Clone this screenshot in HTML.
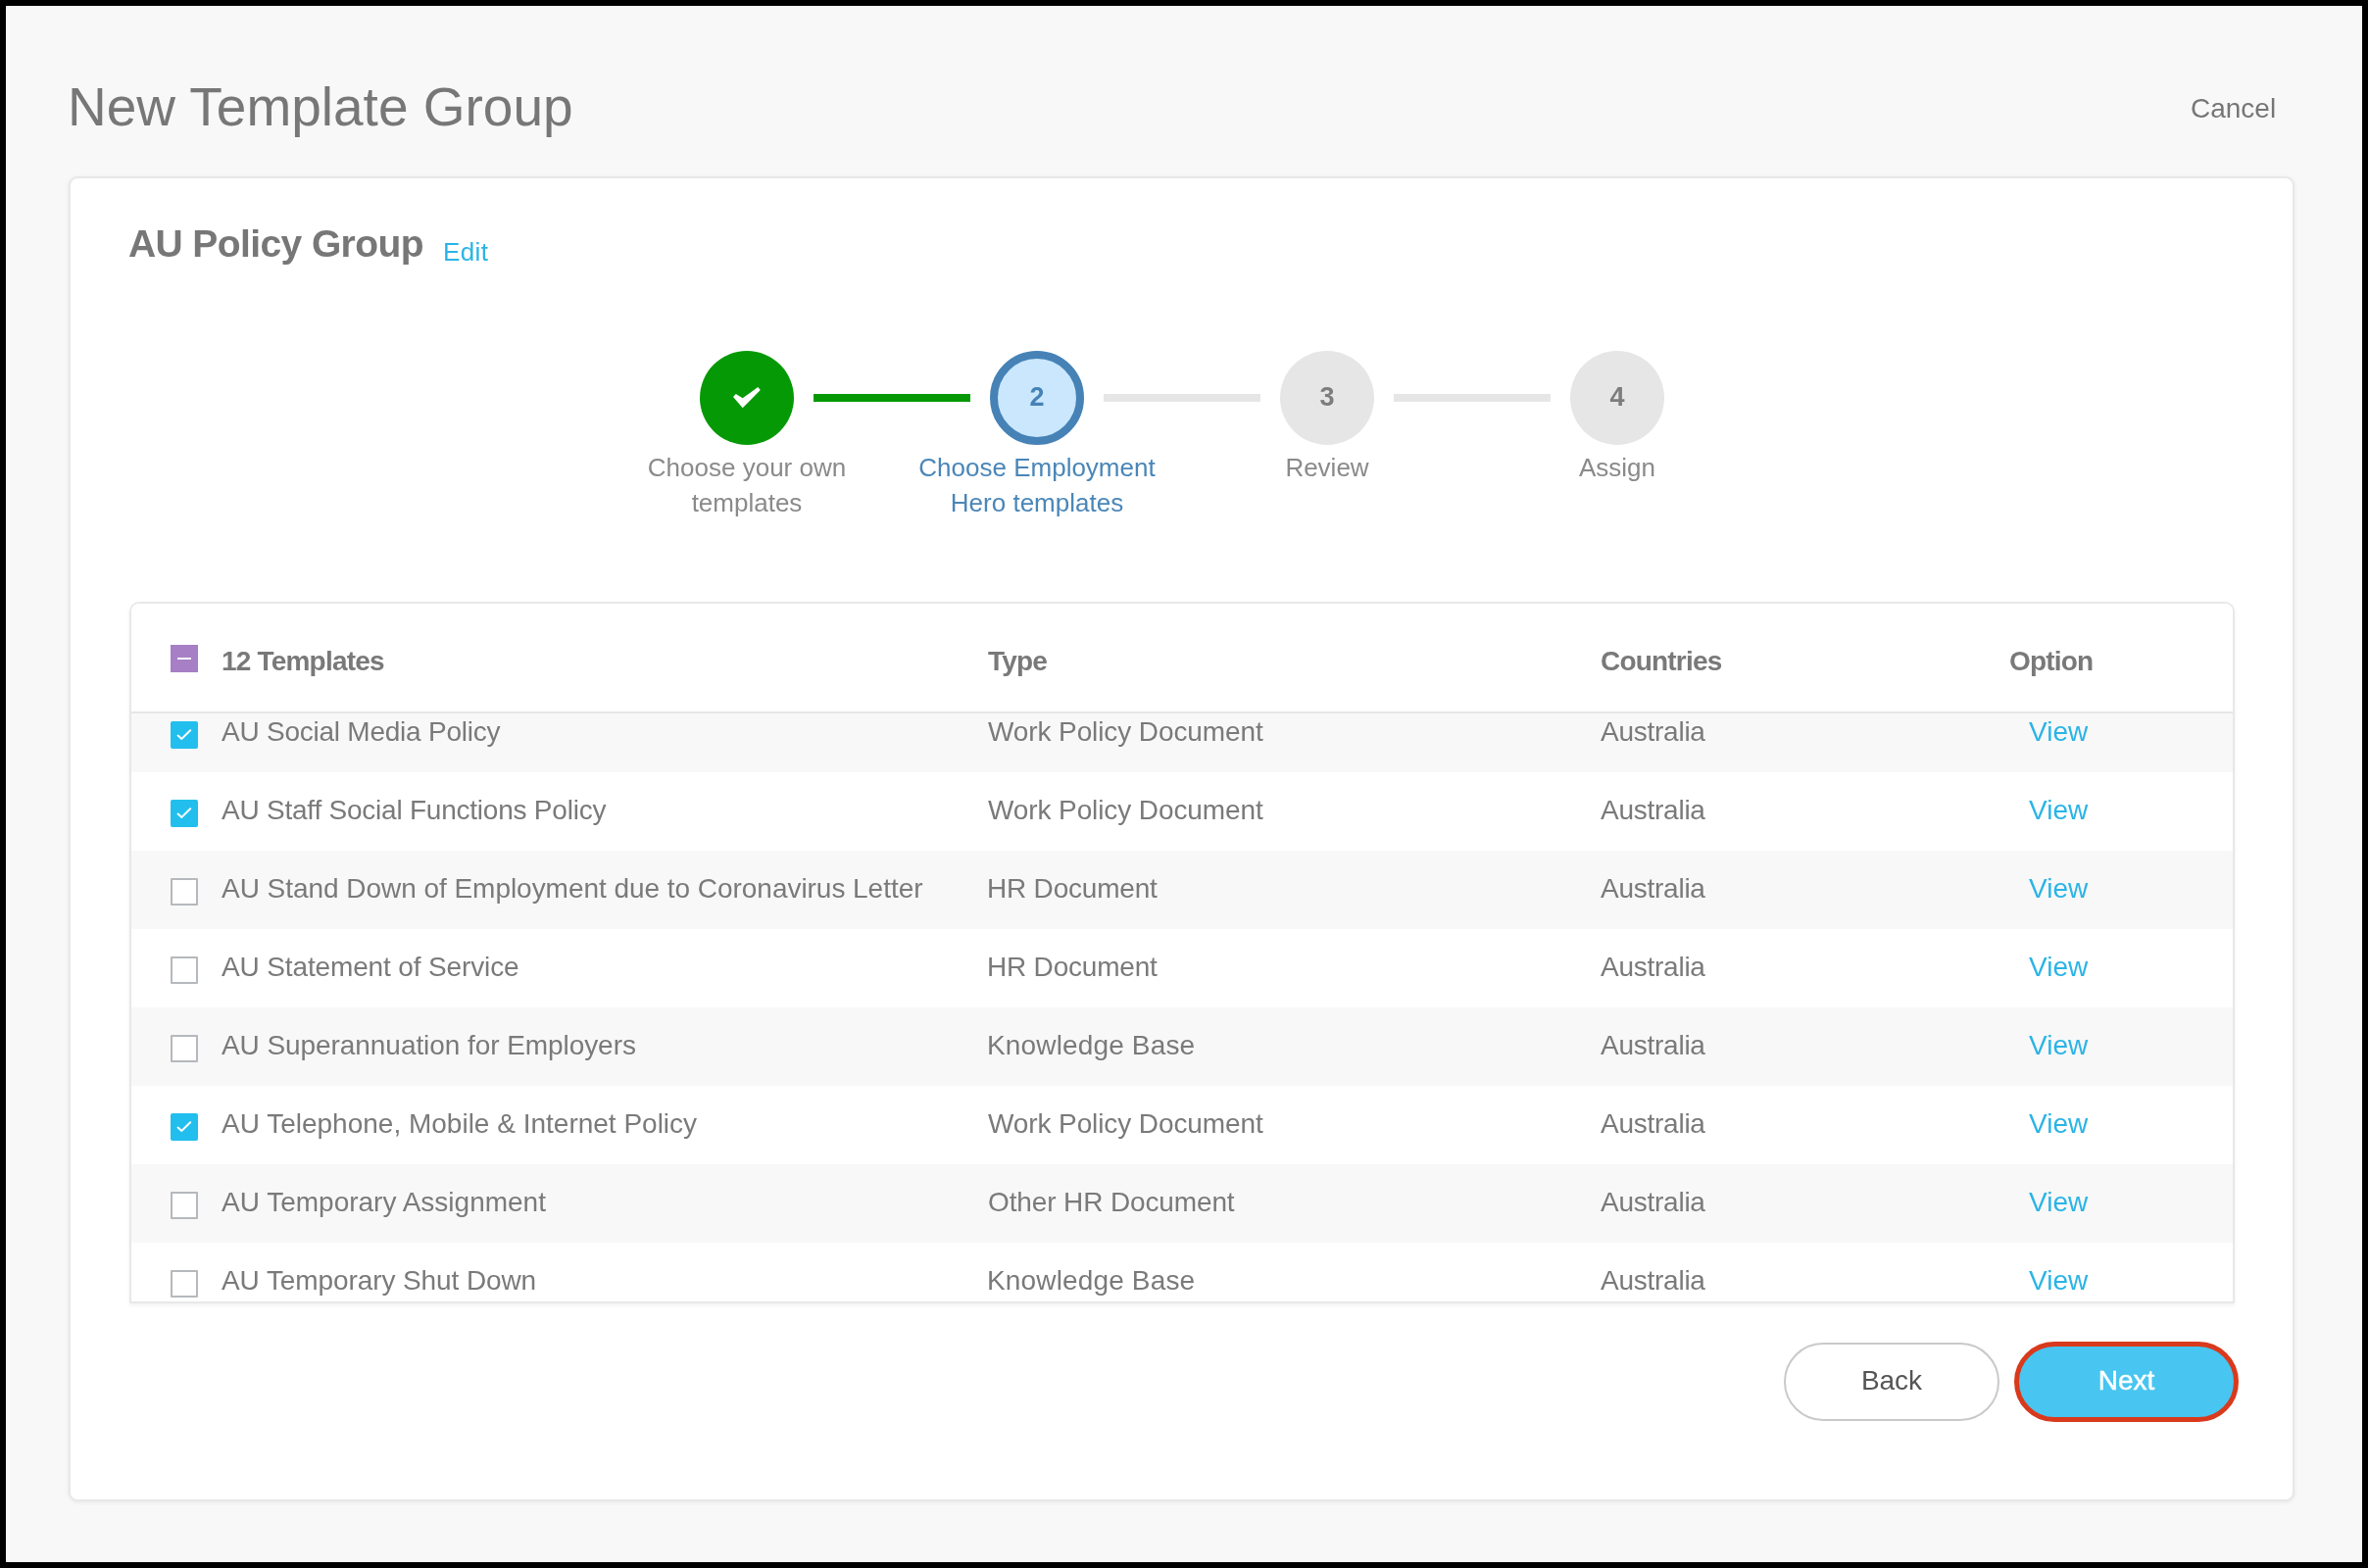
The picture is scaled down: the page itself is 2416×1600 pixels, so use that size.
<!DOCTYPE html>
<html><head><meta charset="utf-8">
<style>
html,body{margin:0;padding:0;}
body{width:2416px;height:1600px;background:#f8f8f8;position:relative;overflow:hidden;font-family:"Liberation Sans",sans-serif;}
.t,.cell,.lbl,.num,.btn{will-change:transform;}
.frame{position:absolute;left:0;top:0;width:2416px;height:1600px;box-sizing:border-box;border:6px solid #000;z-index:10;}
.t{position:absolute;white-space:nowrap;line-height:1;}
.card{position:absolute;left:70px;top:180px;width:2271px;height:1352px;box-sizing:border-box;background:#fff;border:2px solid #e8e8e8;border-radius:9px;box-shadow:0 1px 4px rgba(0,0,0,0.07);}
.circle{position:absolute;width:96px;height:96px;border-radius:50%;top:358px;box-sizing:border-box;}
.line{position:absolute;top:402px;height:8px;width:160px;}
.lbl{position:absolute;top:459px;width:300px;text-align:center;font-size:26px;line-height:36px;}
.num{position:absolute;left:0;top:-1px;width:100%;height:100%;text-align:center;font-weight:bold;font-size:27px;line-height:96px;color:#7d7d7d;}
.table{position:absolute;left:132px;top:614px;width:2148px;height:716px;box-sizing:border-box;border:2px solid #e8e8e8;border-radius:10px 10px 0 0;background:#fff;overflow:hidden;box-shadow:0 2px 4px rgba(0,0,0,0.06);}
.hdr{position:absolute;left:0;top:0;width:100%;height:112px;box-sizing:border-box;border-bottom:2px solid #e6e6e6;background:#fff;z-index:2;}
.row{position:absolute;left:0;width:100%;height:80px;background:#fff;}
.row.g{background:#f8f8f8;}
.cb{position:absolute;left:40px;width:28px;height:28px;box-sizing:border-box;border-radius:2px;}
.cb.on{background:#22bfee;}
.cb.off{border:2px solid #b5b9bd;background:#fff;border-radius:1px;}
.cell{position:absolute;white-space:nowrap;line-height:1;}
.hb{letter-spacing:-0.8px;}
.btn{position:absolute;box-sizing:border-box;border-radius:42px;font-size:28px;text-align:center;display:flex;align-items:center;justify-content:center;padding-bottom:2px;}
</style></head>
<body>
<div class="t" style="left:69px;top:82.4px;font-size:55px;color:#777777;font-weight:400;">New Template Group</div>
<div class="t" style="left:2235px;top:96.5px;font-size:28px;color:#767676;font-weight:400;">Cancel</div>
<div class="card"></div>
<div class="t" style="left:131px;top:229.2px;font-size:39px;color:#777777;font-weight:700;letter-spacing:-0.6px;">AU Policy Group</div>
<div class="t" style="left:452px;top:244.0px;font-size:26px;color:#2ab4e6;font-weight:400;letter-spacing:0.4px;">Edit</div>
<div class="circle" style="left:714px;background:#069906;"><svg width="96" height="96" viewBox="0 0 96 96" style="position:absolute;left:0;top:0"><path d="M36.8 44 L43.7 48.3 L59.3 37.1 L61.8 39.9 L43.7 58.3 L34 47 Z" fill="#fff"/></svg></div>
<div class="line" style="left:830px;background:#069906;"></div>
<div class="circle" style="left:1010px;background:#cbe7fd;border:8px solid #4682b6;"><div class="num" style="color:#4682b6;line-height:80px;top:-1.5px;">2</div></div>
<div class="line" style="left:1126px;background:#e6e6e6;"></div>
<div class="circle" style="left:1306px;background:#e6e6e6;"><div class="num">3</div></div>
<div class="line" style="left:1422px;background:#e6e6e6;"></div>
<div class="circle" style="left:1602px;background:#e6e6e6;"><div class="num">4</div></div>
<div class="lbl" style="left:612px;color:#8a8a8a;">Choose your own<br>templates</div>
<div class="lbl" style="left:908px;color:#4a86b8;">Choose Employment<br>Hero templates</div>
<div class="lbl" style="left:1204px;color:#8a8a8a;">Review</div>
<div class="lbl" style="left:1500px;color:#8a8a8a;">Assign</div>
<div class="table"><div class="hdr"><div class="cb" style="left:40px;top:42px;background:#a67fc4;border-radius:0;"><div style="position:absolute;left:7px;top:13px;width:14px;height:2px;background:#fff"></div></div><div class="cell hb" style="left:92px;top:44.7px;font-size:28px;color:#797979;font-weight:700;">12 Templates</div><div class="cell hb" style="left:874px;top:44.7px;font-size:28px;color:#797979;font-weight:700;">Type</div><div class="cell hb" style="left:1499px;top:44.7px;font-size:28px;color:#797979;font-weight:700;">Countries</div><div class="cell hb" style="left:1916px;top:44.7px;font-size:28px;color:#797979;font-weight:700;">Option</div></div><div class="row g" style="top:92px;"><div class="cb on" style="top:28px;"><svg width="28" height="28" viewBox="0 0 28 28" style="position:absolute;left:0;top:0"><path d="M7.6 14.6 L11.4 17.9 L20.2 9.3" fill="none" stroke="#fff" stroke-width="2" stroke-linecap="round" stroke-linejoin="round"/></svg></div><div class="cell" style="left:92px;top:25.1px;font-size:28px;color:#7a7a7a;font-weight:400;letter-spacing:-0.238px;">AU Social Media Policy</div><div class="cell" style="left:874px;top:25.1px;font-size:28px;color:#7a7a7a;font-weight:400;letter-spacing:-0.105px;">Work Policy Document</div><div class="cell" style="left:1499px;top:25.1px;font-size:28px;color:#7a7a7a;font-weight:400;letter-spacing:-0.250px;">Australia</div><div class="cell" style="left:1936px;top:25.1px;font-size:28px;color:#2ab4e6;font-weight:400;">View</div></div><div class="row" style="top:172px;"><div class="cb on" style="top:28px;"><svg width="28" height="28" viewBox="0 0 28 28" style="position:absolute;left:0;top:0"><path d="M7.6 14.6 L11.4 17.9 L20.2 9.3" fill="none" stroke="#fff" stroke-width="2" stroke-linecap="round" stroke-linejoin="round"/></svg></div><div class="cell" style="left:92px;top:25.1px;font-size:28px;color:#7a7a7a;font-weight:400;letter-spacing:-0.226px;">AU Staff Social Functions Policy</div><div class="cell" style="left:874px;top:25.1px;font-size:28px;color:#7a7a7a;font-weight:400;letter-spacing:-0.105px;">Work Policy Document</div><div class="cell" style="left:1499px;top:25.1px;font-size:28px;color:#7a7a7a;font-weight:400;letter-spacing:-0.250px;">Australia</div><div class="cell" style="left:1936px;top:25.1px;font-size:28px;color:#2ab4e6;font-weight:400;">View</div></div><div class="row g" style="top:252px;"><div class="cb off" style="top:28px;"></div><div class="cell" style="left:92px;top:25.1px;font-size:28px;color:#7a7a7a;font-weight:400;letter-spacing:-0.038px;">AU Stand Down of Employment due to Coronavirus Letter</div><div class="cell" style="left:873px;top:25.1px;font-size:28px;color:#7a7a7a;font-weight:400;letter-spacing:-0.200px;">HR Document</div><div class="cell" style="left:1499px;top:25.1px;font-size:28px;color:#7a7a7a;font-weight:400;letter-spacing:-0.250px;">Australia</div><div class="cell" style="left:1936px;top:25.1px;font-size:28px;color:#2ab4e6;font-weight:400;">View</div></div><div class="row" style="top:332px;"><div class="cb off" style="top:28px;"></div><div class="cell" style="left:92px;top:25.1px;font-size:28px;color:#7a7a7a;font-weight:400;letter-spacing:-0.136px;">AU Statement of Service</div><div class="cell" style="left:873px;top:25.1px;font-size:28px;color:#7a7a7a;font-weight:400;letter-spacing:-0.200px;">HR Document</div><div class="cell" style="left:1499px;top:25.1px;font-size:28px;color:#7a7a7a;font-weight:400;letter-spacing:-0.250px;">Australia</div><div class="cell" style="left:1936px;top:25.1px;font-size:28px;color:#2ab4e6;font-weight:400;">View</div></div><div class="row g" style="top:412px;"><div class="cb off" style="top:28px;"></div><div class="cell" style="left:92px;top:25.1px;font-size:28px;color:#7a7a7a;font-weight:400;letter-spacing:-0.067px;">AU Superannuation for Employers</div><div class="cell" style="left:873px;top:25.1px;font-size:28px;color:#7a7a7a;font-weight:400;letter-spacing:0.154px;">Knowledge Base</div><div class="cell" style="left:1499px;top:25.1px;font-size:28px;color:#7a7a7a;font-weight:400;letter-spacing:-0.250px;">Australia</div><div class="cell" style="left:1936px;top:25.1px;font-size:28px;color:#2ab4e6;font-weight:400;">View</div></div><div class="row" style="top:492px;"><div class="cb on" style="top:28px;"><svg width="28" height="28" viewBox="0 0 28 28" style="position:absolute;left:0;top:0"><path d="M7.6 14.6 L11.4 17.9 L20.2 9.3" fill="none" stroke="#fff" stroke-width="2" stroke-linecap="round" stroke-linejoin="round"/></svg></div><div class="cell" style="left:92px;top:25.1px;font-size:28px;color:#7a7a7a;font-weight:400;">AU Telephone, Mobile &amp; Internet Policy</div><div class="cell" style="left:874px;top:25.1px;font-size:28px;color:#7a7a7a;font-weight:400;letter-spacing:-0.105px;">Work Policy Document</div><div class="cell" style="left:1499px;top:25.1px;font-size:28px;color:#7a7a7a;font-weight:400;letter-spacing:-0.250px;">Australia</div><div class="cell" style="left:1936px;top:25.1px;font-size:28px;color:#2ab4e6;font-weight:400;">View</div></div><div class="row g" style="top:572px;"><div class="cb off" style="top:28px;"></div><div class="cell" style="left:92px;top:25.1px;font-size:28px;color:#7a7a7a;font-weight:400;">AU Temporary Assignment</div><div class="cell" style="left:874px;top:25.1px;font-size:28px;color:#7a7a7a;font-weight:400;letter-spacing:-0.125px;">Other HR Document</div><div class="cell" style="left:1499px;top:25.1px;font-size:28px;color:#7a7a7a;font-weight:400;letter-spacing:-0.250px;">Australia</div><div class="cell" style="left:1936px;top:25.1px;font-size:28px;color:#2ab4e6;font-weight:400;">View</div></div><div class="row" style="top:652px;"><div class="cb off" style="top:28px;"></div><div class="cell" style="left:92px;top:25.1px;font-size:28px;color:#7a7a7a;font-weight:400;letter-spacing:-0.095px;">AU Temporary Shut Down</div><div class="cell" style="left:873px;top:25.1px;font-size:28px;color:#7a7a7a;font-weight:400;letter-spacing:0.154px;">Knowledge Base</div><div class="cell" style="left:1499px;top:25.1px;font-size:28px;color:#7a7a7a;font-weight:400;letter-spacing:-0.250px;">Australia</div><div class="cell" style="left:1936px;top:25.1px;font-size:28px;color:#2ab4e6;font-weight:400;">View</div></div></div>
<div class="btn" style="left:1820px;top:1370px;width:220px;height:80px;border:2px solid #c9c9c9;background:#fff;color:#555;">Back</div>
<div class="btn" style="left:2055px;top:1369px;width:229px;height:82px;border:5px solid #d9391c;background:#48c5f0;color:#fff;-webkit-text-stroke:0.5px #fff;">Next</div>
<div class="frame"></div>
</body></html>
